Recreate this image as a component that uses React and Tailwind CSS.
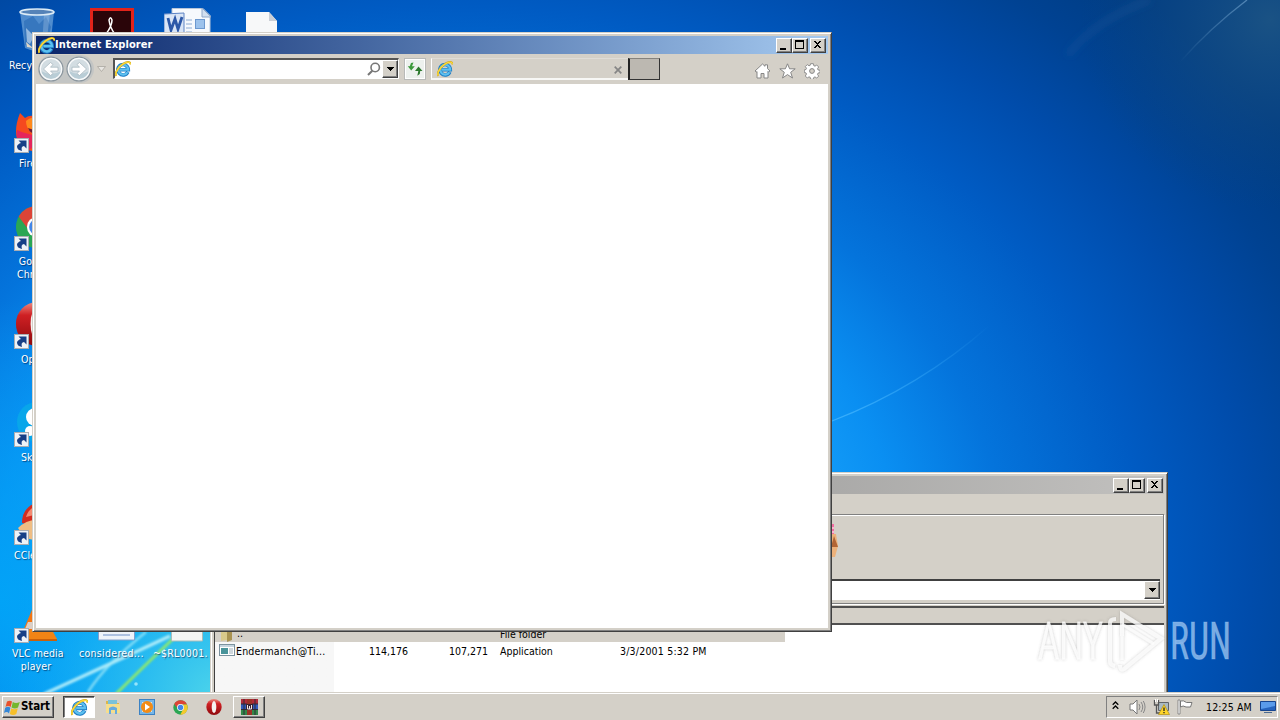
import React from "react";

const FONT =
  "font-['DejaVu_Sans_Condensed','DejaVu_Sans',sans-serif] [font-stretch:condensed]";

function IEIcon({ size = 16 }) {
  return (
    <svg width={size} height={size} viewBox="0 0 16 16" className="shrink-0">
      <path d="M12.8 11A5.200 5.200 0 1 1 13.300 8.700H5" fill="none" stroke="#1d7cc4" strokeWidth="3.600" />
      <path d="M12.500 11.200A5 5 0 1 1 13.200 8.600H5" fill="none" stroke="#5cc0f0" strokeWidth="2.200" />
      <path d="M1.400 14.800C-.6 12.500 2.600 7 7.200 3.600 11 .8 15.600-.3 15.400 3.400" fill="none" stroke="#c79d1a" strokeWidth="1.900" />
      <path d="M1.400 14.600C-.4 12.400 2.600 7 7.200 3.600 11 .8 15.400-.1 15.300 3.200" fill="none" stroke="#fbd93a" strokeWidth="1.400" />
    </svg>
  );
}

function ChromeIcon({ size, flat }) {
  return (
    <svg width={size} height={size} viewBox="0 0 48 48" className="block">
      <circle cx="24" cy="24" r="23" fill="#2aa653" />
      <path d="M4 12.5A23 23 0 0 1 44.6 14H24a10 10 0 0 0-9.6 12.5z" fill="#dc4437" />
      <path d="M44.600 14A23 23 0 0 1 23 47l10-18a10 10 0 0 0-3-15z" fill={flat ? "#f4c92c" : "#f7cc35"} />
      <circle cx="24" cy="24" r="11" fill="#fff" />
      <circle cx="24" cy="24" r="8.600" fill="#4286e8" />
    </svg>
  );
}

function OperaIcon({ size }) {
  return (
    <svg width={size} height={size} viewBox="0 0 48 48" className="block">
      <defs>
        <linearGradient id="opera" x1="0" y1="0" x2="0" y2="1">
          <stop offset="0" stopColor="#ee8b80" />
          <stop offset=".3" stopColor="#cf2023" />
          <stop offset="1" stopColor="#8e0a0e" />
        </linearGradient>
      </defs>
      <ellipse cx="24" cy="24" rx="23" ry="24" fill="url(#opera)" />
      <ellipse cx="24" cy="24" rx="7" ry="18" fill="#f6f2f0" />
    </svg>
  );
}

function CaptionButton({ kind }) {
  return (
    <div className="h-[15px] w-4 border border-t-white border-l-white border-r-[#404040] border-b-[#404040] bg-[#d4d0c8] shadow-[inset_-1px_-1px_0_#808080]">
      <svg width="14" height="13" viewBox="0 0 14 13" className="block" shapeRendering="crispEdges">
        {kind === "min" && <path d="M3 9h6v2H3z" />}
        {kind === "max" && <path d="M2 1h9v9H2zM3 3v6h7V3z" fillRule="evenodd" />}
        {kind === "close" && (
          <path
            d="M3 2h2v1h1v1h1V3h1V2h2v1h-1v1H8v1H7v1h1v1h1v1h1v1H8V8H7V7H6v1H5v1H3V8h1V7h1V6h1V5H5V4H4V3H3z"
          />
        )}
      </svg>
    </div>
  );
}

function Captions() {
  return (
    <div className="flex">
      <CaptionButton kind="min" />
      <CaptionButton kind="max" />
      <div className="w-0.5" />
      <CaptionButton kind="close" />
    </div>
  );
}

function DropButton({ className }) {
  return (
    <div className={"flex shrink-0 items-center justify-center border border-t-white border-l-white border-r-[#404040] border-b-[#404040] bg-[#d4d0c8] shadow-[inset_-1px_-1px_0_#808080] " + className}>
      <svg width="7" height="4" viewBox="0 0 7 4" shapeRendering="crispEdges">
        <path d="M0 0h7v1H6v1H5v1H4v1H3V3H2V2H1V1H0z" />
      </svg>
    </div>
  );
}

function Wallpaper() {
  return (
    <svg className="absolute inset-0" width="1280" height="720" viewBox="0 0 1280 720">
      <defs>
        <radialGradient id="sky" gradientUnits="userSpaceOnUse" cx="0" cy="0" r="1.1" gradientTransform="translate(450 560) scale(900 720)">
          <stop offset=".36" stopColor="#16a0fa" />
          <stop offset=".455" stopColor="#0a8ff2" />
          <stop offset=".56" stopColor="#0474dc" />
          <stop offset=".7" stopColor="#005bc3" />
          <stop offset=".81" stopColor="#004cab" />
          <stop offset=".91" stopColor="#004292" />
          <stop offset="1" stopColor="#003c82" />
        </radialGradient>
        <radialGradient id="cyan" gradientUnits="userSpaceOnUse" cx="220" cy="700" r="230">
          <stop offset="0" stopColor="#4fd6ea" />
          <stop offset=".5" stopColor="#22b9f0" stopOpacity=".75" />
          <stop offset="1" stopColor="#00a4f6" stopOpacity="0" />
        </radialGradient>
        <radialGradient id="left" gradientUnits="userSpaceOnUse" cx="0" cy="600" r="300">
          <stop offset="0" stopColor="#00a8f8" stopOpacity=".8" />
          <stop offset="1" stopColor="#00a4f6" stopOpacity="0" />
        </radialGradient>
        <radialGradient id="corner" gradientUnits="userSpaceOnUse" cx="1270" cy="20" r="190">
          <stop offset="0" stopColor="#1a5284" />
          <stop offset="1" stopColor="#0a4484" stopOpacity="0" />
        </radialGradient>
        <linearGradient id="arc" gradientUnits="userSpaceOnUse" x1="832" y1="420" x2="990" y2="325">
          <stop offset="0" stopColor="#48b8ff" stopOpacity=".75" />
          <stop offset="1" stopColor="#48b8ff" stopOpacity="0" />
        </linearGradient>
        <linearGradient id="ray" gradientUnits="userSpaceOnUse" x1="1245" y1="0" x2="1180" y2="62">
          <stop offset="0" stopColor="#6a9cc8" stopOpacity=".7" />
          <stop offset="1" stopColor="#6a9cc8" stopOpacity="0" />
        </linearGradient>
        <filter id="soft"><feGaussianBlur stdDeviation="1.2" /></filter>
        <filter id="softer"><feGaussianBlur stdDeviation="3.5" /></filter>
      </defs>
      <rect width="1280" height="720" fill="url(#sky)" />
      <rect y="300" width="300" height="420" fill="url(#left)" />
      <rect width="460" height="720" fill="url(#cyan)" />
      <rect x="1040" width="240" height="240" fill="url(#corner)" />
      <path d="M832 421Q920 387 990 325" stroke="url(#arc)" strokeWidth="1.300" fill="none" />
      <path d="M1247 0Q1210 28 1180 62" stroke="url(#ray)" strokeWidth="1.300" fill="none" />
      <path d="M1150 0Q1095 20 1068 55" stroke="#2b66a0" strokeOpacity=".28" strokeWidth="6" fill="none" filter="url(#softer)" />
      <g fill="none" filter="url(#soft)">
        <path d="M44 694Q110 664 170 636" stroke="#b9f1fb" strokeWidth="3.500" strokeOpacity=".9" />
        <path d="M88 692Q106 664 146 632" stroke="#a9ecf8" strokeWidth="2.500" strokeOpacity=".7" />
        <path d="M116 694Q142 668 176 636" stroke="#8ee86e" strokeWidth="3" />
      </g>
      <circle cx="136" cy="684" r="1.800" fill="#c5f6ff" fillOpacity=".7" />
    </svg>
  );
}

function Shortcut({ className }) {
  return (
    <svg width="15" height="15" viewBox="0 0 15 15" className={"absolute " + className}>
      <rect x=".5" y=".5" width="14" height="14" fill="#eef2f7" stroke="#a9adb3" />
      <path d="M4.500 2.500h8v8L10 8Q6.500 8.500 8 13 3 12 3 8.500 3.500 6 7 5z" fill="#173f86" />
    </svg>
  );
}

function Label({ className, children }) {
  return (
    <div className={"absolute text-center text-[10.5px] leading-[13px] tracking-[0.1px] whitespace-nowrap text-white [text-shadow:1px_1px_1px_rgba(0,20,60,.6)] " + className}>
      {children}
    </div>
  );
}

function DesktopIcons() {
  return (
    <>
      <svg className="absolute top-1.5 left-4" width="42" height="48" viewBox="0 0 42 48">
        <path d="M4 6l5 36q12 6 25 0l4-36z" fill="#7aaede" fillOpacity=".65" />
        <path d="M8 15l9-5 6 8 7-7 5 10-4 18-9-4-6 6-7-2z" fill="#2e6eb8" fillOpacity=".7" />
        <path d="M10 22l8 8-4 8-3-2z" fill="#d7e8f6" fillOpacity=".6" />
        <path d="M28 8h6l-4 32h-4z" fill="#d7e8f6" fillOpacity=".25" />
        <path d="M10 36l7 6-6-1z" fill="#e0d8c8" />
        <ellipse cx="21" cy="6" rx="17" ry="3" fill="#5583b8" stroke="#dcebf6" strokeWidth="1.600" />
      </svg>
      <Label className="top-[59px] left-[9px]">Recycle Bin</Label>

      <svg className="absolute top-2 left-[90px]" width="44" height="26" viewBox="0 0 44 26">
        <rect width="44" height="44" fill="#e2231a" />
        <rect x="3" y="3" width="38" height="38" fill="#2a0509" />
        <path d="M16 26Q22 18 22 12 20.500 7.500 19 12 20 20 25 26" fill="none" stroke="#fff" strokeWidth="1.500" />
      </svg>

      <svg className="absolute top-2 left-[164px]" width="48" height="26" viewBox="0 0 48 26">
        <path d="M8 .500h31l7 7V26H8z" fill="#f6f9fd" stroke="#b7c6da" />
        <path d="M38 0v9h9z" fill="#d2dfef" stroke="#91a8c8" />
        <path d="M22 12h6M22 16h6M22 20h6M22 24h6" stroke="#8cabd4" />
        <rect x="31.500" y="11.500" width="9" height="9" fill="#9cc2ec" stroke="#6c98cf" />
        <path d="M0 6l20-1v21H0z" fill="#d9e5f6" stroke="#5c83c4" />
        <path d="M4 10l3 12 4-11 3 10 4-12" fill="none" stroke="#2c58a8" strokeWidth="2.800" />
      </svg>

      <svg className="absolute top-3 left-[246px]" width="32" height="24" viewBox="0 0 32 24">
        <path d="M0 0h23l8 9v15H0z" fill="#f7f8f9" />
        <path d="M23 0v9h8z" fill="#c9ced6" />
      </svg>

      <svg className="absolute top-[110px] left-[15px]" width="44" height="44" viewBox="0 0 44 44">
        <path d="M5 3l5 5q4-3 9-2l4-3v38Q6 42 2 29-1 18 5 3z" fill="#f5491f" />
        <path d="M2 20Q0 36 14 40l9-7V26q-12-2-21-6z" fill="#e5255c" />
        <path d="M11 11q5-5 12-3v20q-5-1-7-6-5-4-5-11z" fill="#ff8a1c" />
        <path d="M13 18l9 3v3q-7 0-9-6z" fill="#6a1b38" />
      </svg>
      <Shortcut className="top-[138px] left-3.5" />
      <Label className="top-[157px] left-[19px]">Firefox</Label>

      <div className="absolute top-[205px] left-[15px]"><ChromeIcon size={44} /></div>
      <Shortcut className="top-[236px] left-3.5" />
      <Label className="top-[255px] left-[17px]">Google<br />Chrome</Label>

      <div className="absolute top-[302px] left-[15px]"><OperaIcon size={44} /></div>
      <Shortcut className="top-[334px] left-3.5" />
      <Label className="top-[353px] left-[21px]">Opera</Label>

      <svg className="absolute top-[400px] left-[15px]" width="44" height="44" viewBox="0 0 44 44">
        <circle cx="22" cy="22" r="20" fill="#08a6ea" />
        <circle cx="20" cy="17" r="9" fill="#fff" />
        <circle cx="15" cy="31" r="5" fill="#fff" />
      </svg>
      <Shortcut className="top-[432px] left-3.5" />
      <Label className="top-[451px] left-[21px]">Skype</Label>

      <svg className="absolute top-[500px] left-[18px]" width="40" height="44" viewBox="0 0 40 44">
        <path d="M4 23Q4 7 20 2v26L9 24z" fill="#d32d20" />
        <path d="M8 17q2-7 8-10v8z" fill="#f48a70" />
        <path d="M0 28q9-9 20-8v20q-12 2-20-12z" fill="#efbd83" />
      </svg>
      <Shortcut className="top-[530px] left-3.5" />
      <Label className="top-[549px] left-[14px]">CCleaner</Label>

      <svg className="absolute top-[600px] left-[18px]" width="42" height="44" viewBox="0 0 42 44">
        <path d="M16 5h7l9 26H5z" fill="#f37512" />
        <path d="M10 22h16l3 7H7z" fill="#dccfc6" />
        <path d="M4 30h30l5 9H0z" fill="#f18415" />
        <path d="M0 39h39v2H0z" fill="#c9600a" />
      </svg>
      <Shortcut className="top-[628px] left-3.5" />
      <Label className="top-[647px] left-3 w-12">VLC media<br />player</Label>

      <svg className="absolute top-[610px] left-[98px]" width="37" height="32" viewBox="0 0 37 32">
        <path d="M.500 0h36v30H.500z" fill="#eef3fa" stroke="#7f9fce" />
        <path d="M5 25h27M5 21h27" stroke="#6d8fc8" />
      </svg>
      <Label className="top-[647px] left-[79px] tracking-[0.3px]">considered...</Label>

      <svg className="absolute top-[610px] left-[171px]" width="32" height="32" viewBox="0 0 32 32">
        <path d="M.500 0h31v31H.500z" fill="#f4f5f4" stroke="#a9bcb9" />
      </svg>
      <Label className="top-[647px] left-[153px] tracking-[0.2px]">~$RL0001.</Label>
    </>
  );
}

const FILE_GRID = "grid grid-cols-[119px_74px_80px_12px_120px_1fr] items-center";

function ArchiveWindow() {
  return (
    <div className="absolute top-[472px] left-[210px] flex h-[240px] w-[958px] flex-col border border-t-[#d4d0c8] border-l-[#d4d0c8] border-r-[#404040] border-b-[#404040] bg-[#d4d0c8] p-[3px] shadow-[inset_1px_1px_0_#fff,inset_-1px_-1px_0_#808080]">
      <div className="flex h-[18px] shrink-0 items-center justify-end bg-linear-to-r from-[#808080] to-[#c2c1bf] pr-px">
        <Captions />
      </div>
      <div className="h-5 shrink-0" />
      <div className="flex h-[90px] shrink-0 flex-col border border-[#808080] shadow-[inset_1px_1px_0_#fff,1px_1px_0_#fff]">
        <div className="flex h-16 shrink-0 pt-[7px] pl-[600px]">
          <svg width="24" height="40" viewBox="0 0 24 40">
            <path d="M4 2h15v11H4z" fill="#f36ca2" />
            <path d="M12 5h7v2h-7zM12 9h7v2h-7z" fill="#f9b7cc" />
            <path d="M4 12h17l2 12-3 11H4z" fill="#edb17a" />
            <path d="M19 14l4 11h-7z" fill="#b26535" />
            <path d="M11 14h6l-1 9h-3z" fill="#f9e2ba" />
          </svg>
        </div>
        <div className="mr-[3px] flex h-[22px] border-t-2 border-b border-t-[#404040] border-b-[#d4d0c8] bg-white">
          <div className="flex-1" />
          <DropButton className="h-[18px] w-4" />
        </div>
      </div>
      <div className="mt-[2px] flex min-h-0 flex-1 flex-col border-t-2 border-l border-t-[#505050] border-l-[#404040] bg-white text-[10.500px] text-black">
        <div className="h-[17px] shrink-0 border-b-2 border-b-[#505050] bg-[#d4d0c8]" />
        <div className={FILE_GRID + " mt-px h-4 w-[570px] shrink-0 bg-[#d4d0c8]"}>
          <div className="flex items-center gap-[3px] pl-1">
            <svg width="15" height="15" viewBox="0 0 15 15">
              <path d="M2 2l6-2v13l-6 1z" fill="#d9c98b" />
              <path d="M8 0l5 2v11l-5 2z" fill="#a99352" />
            </svg>
            <span>..</span>
          </div>
          <span /><span /><span />
          <span className="relative top-px">File folder</span>
        </div>
        <div className="flex min-h-0 flex-1 bg-linear-to-r from-[#f7f7f7] from-[119px] to-white to-[119px]">
          <div className={FILE_GRID + " h-5 flex-1"}>
            <div className="flex items-center gap-px pl-1">
              <svg width="16" height="12" viewBox="0 0 16 12" className="-mt-1 shrink-0">
                <rect x=".500" y=".500" width="15" height="11" fill="#fff" stroke="#7b929e" />
                <path d="M1 1h14v2H1z" fill="#c5d5df" />
                <path d="M2 4h7v6H2z" fill="#49949a" />
                <path d="M10 5h4M10 7h4M10 9h4" stroke="#9cadb8" />
              </svg>
              <span className="tracking-[0.2px] whitespace-nowrap">Endermanch@Ti...</span>
            </div>
            <span className="text-right">114,176</span>
            <span className="text-right">107,271</span>
            <span />
            <span>Application</span>
            <span className="tracking-[0.2px]">3/3/2001 5:32 PM</span>
          </div>
        </div>
      </div>
    </div>
  );
}

function NavCircle({ flip }) {
  return (
    <svg width="26" height="26" viewBox="0 0 26 26" className={"shrink-0 " + (flip ? "-scale-x-100" : "")}>
      <circle cx="13" cy="13" r="11.900" fill="#d3dde2" stroke="#8c979f" strokeWidth="1.400" />
      <path d="M3 15a10.200 10.200 0 0 0 20 0q-5 3-10 3T3 15z" fill="#b9cdd6" />
      <circle cx="13" cy="13" r="10.700" fill="none" stroke="#fff" strokeOpacity=".85" strokeWidth="1.300" />
      <path d="M5.500 13l7-6.500L15 8.500l-2.500 2.700H20v3.800h-7.500L15 17.500l-2.500 2z" fill="#fff" stroke="#a4b3bc" strokeWidth=".7" />
    </svg>
  );
}

function BrowserWindow() {
  return (
    <div className="absolute top-8 left-8 flex h-[600px] w-[800px] flex-col border border-t-[#d4d0c8] border-l-[#d4d0c8] border-r-[#404040] border-b-[#404040] bg-[#d4d0c8] p-[3px] shadow-[inset_1px_1px_0_#fff,inset_-1px_-1px_0_#808080]">
      <div className="flex h-[18px] shrink-0 items-center justify-between bg-linear-to-r from-[#0a246a] to-[#a6caf0] pr-0.5 pl-0.5">
        <div className="flex items-center">
          <IEIcon size={17} />
          <span className="text-[11px] font-bold tracking-[0.1px] text-white">Internet Explorer</span>
        </div>
        <Captions />
      </div>
      <div className="flex h-[30px] shrink-0 items-center">
        <div className="ml-0.5 flex h-7 w-[56px] items-center gap-0.5 rounded-full bg-[#c3c5c4]">
          <NavCircle />
          <NavCircle flip />
        </div>
        <svg width="9" height="6" viewBox="0 0 9 6" className="ml-[3px] shrink-0">
          <path d="M.500.500h8l-4 5z" fill="#e8e6e2" stroke="#aaa69e" strokeWidth=".8" />
        </svg>
        <div className="-mt-px ml-[7px] flex h-[21px] w-[286px] items-center border-t-2 border-l-2 border-t-[#555] border-l-[#555] border-r border-b border-r-white border-b-white bg-white">
          <IEIcon />
          <div className="flex-1" />
          <svg width="16" height="16" viewBox="0 0 16 16">
            <circle cx="9.200" cy="6.500" r="4.200" fill="none" stroke="#777" strokeWidth="1.600" />
            <path d="M6.300 9.700L2 14" stroke="#777" strokeWidth="2" />
          </svg>
          <DropButton className="h-[18px] w-4" />
        </div>
        <div className="ml-[5px] flex h-[22px] w-[22px] items-center justify-center border border-[#b8bab8] bg-[#edf1ee] shadow-[inset_0_0_0_1px_#fff]">
          <svg width="16" height="16" viewBox="0 0 16 16" className="shrink-0">
            <path d="M6.500 1.500L5 5.200h2.800L4.200 9.500.800 5.200h2L4 2z" fill="#3c9a3c" />
            <path d="M11.500 5.500l4 4.500h-2.300l-.400 3-2.500 1.800 1-4.800H8z" fill="#2c7a2e" />
          </svg>
        </div>
        <div className="ml-[5px] flex h-[22px] w-[197px] items-center border-t border-b-2 border-l border-t-[#dfdcd6] border-b-[#f7f7f5] border-l-white pl-[5px]">
          <IEIcon />
          <div className="flex-1" />
          <svg width="8" height="8" viewBox="0 0 8 8" className="mt-0.5 mr-1.5">
            <path d="M.700.700l6.600 6.600M7.300.700L.700 7.300" stroke="#858585" strokeWidth="1.700" />
          </svg>
        </div>
        <div className="h-[22px] w-8 border-t border-r border-b border-l-2 border-t-[#85827d] border-r-[#333] border-b-[#333] border-l-[#222] bg-[#bcb8b1]" />
        <div className="flex-1" />
        <div className="mt-1 mr-2 flex items-center gap-2">
          <svg width="17" height="16" viewBox="0 0 17 16">
            <path d="M1 8l7.500-7L11 3.300V1.800h2.500v3.800L16 8l-1.500 1-.500-.500V15h-4v-4.500H7V15H3V8.500L2.400 9z" fill="#fff" stroke="#868686" />
          </svg>
          <svg width="17" height="16" viewBox="0 0 17 16">
            <path d="M8.500.800l2.100 5h5.600l-4.500 3.500 1.800 5.700-5-3.400-5 3.400 1.800-5.700L.800 5.800h5.600z" fill="#fff" stroke="#868686" />
          </svg>
          <svg width="16" height="16" viewBox="0 0 16 16">
            <path d="M6.600.700h2.800l.4 2 1.200.5 1.700-1.200 2 2-1.200 1.700.5 1.200 2 .4v2.400l-2 .4-.5 1.300 1.200 1.700-2 2-1.700-1.200-1.200.5-.4 1.900H6.600l-.4-2-1.200-.5-1.700 1.200-2-2L2.500 11 2 9.900l-1.700-.400V6.900L2 6.500l.500-1.200L1.300 3.600l2-2L5 2.800l1.200-.5z" fill="#fff" stroke="#868686" strokeWidth=".9" />
            <circle cx="8" cy="8" r="2.400" fill="#d4d0c8" stroke="#868686" />
          </svg>
        </div>
      </div>
      <div className="min-h-0 flex-1 bg-white" />
    </div>
  );
}

function Taskbar() {
  return (
    <div className="absolute inset-x-0 bottom-0 flex h-7 items-center border-t border-[#d4d0c8] bg-[#d4d0c8] pt-px pr-0.5 pl-0.5 shadow-[inset_0_1px_0_#fff]">
      <div className="flex h-[22px] w-[52px] items-center gap-px border border-t-white border-l-white border-r-[#404040] border-b-[#404040] pl-px shadow-[inset_-1px_-1px_0_#808080]">
        <svg width="16" height="15" viewBox="0 0 16 15" className="shrink-0">
          <path d="M3 1.500Q6 0 8 1.500L6.700 7Q4 5 1.500 7z" fill="#e8512b" />
          <path d="M8.800 2q3 2 7 0L14 7.500q-3 2-6.500 0z" fill="#74b72e" />
          <path d="M1.200 7.800q3-2 5.200 0L5 13.500Q3 11 0 13z" fill="#3487d7" />
          <path d="M7.300 8.300q3 2 6.500 0L12.300 14q-3 2-6.500 0z" fill="#f6bf29" />
        </svg>
        <span className="text-[11.500px] font-bold tracking-[-0.1px] text-black">Start</span>
      </div>
      <div className="ml-[9px] flex h-[22px] w-8 items-center justify-center border border-t-[#404040] border-l-[#404040] border-r-white border-b-white bg-white shadow-[inset_1px_1px_0_#808080]">
        <IEIcon size={17} />
      </div>
      <div className="ml-[10px] flex items-center gap-[18px]">
        <svg width="16" height="16" viewBox="0 0 16 16">
          <path d="M1 2h5l1 2h7v9H1z" fill="#dcb64b" />
          <path d="M3 1h9v5H3z" fill="#7ac2d8" />
          <path d="M1 5h14v9H1z" fill="#f6de8c" />
          <path d="M4 15V9q4-3 8 0v6h-2v-4H6v4z" fill="#68abdc" />
        </svg>
        <svg width="16" height="16" viewBox="0 0 16 16">
          <rect x=".500" y=".500" width="15" height="15" fill="#75b6e8" stroke="#3b82c4" />
          <path d="M3 3h10v10H3z" fill="#d8edfa" />
          <circle cx="8" cy="8" r="6" fill="#f28b16" />
          <path d="M6 4.500l5 3.500-5 3.500z" fill="#fff" />
        </svg>
        <ChromeIcon size={15} flat />
        <OperaIcon size={16} />
      </div>
      <div className="ml-[11px] flex h-[22px] w-8 items-center justify-center border border-t-white border-l-white border-r-[#404040] border-b-[#404040] shadow-[inset_-1px_-1px_0_#808080]">
        <svg width="17" height="16" viewBox="0 0 17 16">
          <path d="M0 0h17v5H0z" fill="#b12a38" />
          <path d="M0 5h17v5H0z" fill="#315bbd" />
          <path d="M0 10h17v6H0z" fill="#338748" />
          <path d="M3 0v16M14 0v16M0 5h17M0 10.500h17" stroke="#302b35" />
          <path d="M6 0h5v16H6z" fill="#9c3226" />
          <path d="M5 5h7v6H5z" fill="#3a2430" />
          <path d="M6.500 6v4h4V6M8.500 7v3" fill="none" stroke="#f1e7e4" />
        </svg>
      </div>
      <div className="flex-1" />
      <div className="flex h-[22px] w-[172px] items-center border border-t-[#808080] border-l-[#808080] border-r-white border-b-white pl-[5px]">
        <svg width="7" height="9" viewBox="0 0 7 9" className="-mt-1 shrink-0">
          <path d="M.700 3.800L3.500 1l2.800 2.800M.700 7.800L3.500 5l2.800 2.800" fill="none" stroke="#000" strokeWidth="1.300" />
        </svg>
        <svg width="17" height="16" viewBox="0 0 17 16" className="ml-[10px] shrink-0">
          <path d="M1 5h3l4-4v14l-4-4H1z" fill="#fff" stroke="#777" />
          <path d="M10 5q2 3 0 6M12 3q3.500 5 0 10M14.300 2q3.500 6 0 12" fill="none" stroke="#888" />
        </svg>
        <svg width="17" height="16" viewBox="0 0 17 16" className="ml-[7px] shrink-0">
          <path d="M5.500 3.500h10v8h-10z" fill="#a9b9c2" stroke="#606468" />
          <path d="M1.500 1v5h4V1M3.500 6v8h5" fill="none" stroke="#555" strokeWidth="1.300" />
          <path d="M2.500 0v3M4.500 0v3" stroke="#fff" />
          <path d="M11 5.500l5.500 10h-11z" fill="#ffd529" stroke="#a98500" strokeWidth=".6" />
          <path d="M11 8.500v3.500M11 13v1.300" stroke="#222" strokeWidth="1.300" />
        </svg>
        <svg width="17" height="16" viewBox="0 0 17 16" className="ml-[7px] shrink-0">
          <path d="M1 1h2v14H1z" fill="#fff" stroke="#777" strokeWidth=".8" />
          <path d="M3.500 2q3-1 6 1.500H15L13.500 8H9Q6 6 3.500 8z" fill="#fff" stroke="#777" />
        </svg>
        <span className="mt-px ml-3 text-[10.500px] tracking-[0.12px] whitespace-nowrap text-black">12:25 AM</span>
        <div className="flex-1" />
        <svg width="16" height="14" viewBox="0 0 16 14" className="mr-px shrink-0">
          <path d="M.500 1.500h15v9H.500z" fill="#2563bd" stroke="#17458f" />
          <path d="M1 2h14v4L1 9z" fill="#5a9bea" />
          <path d="M4 12h8v1H4z" fill="#4b6a91" />
        </svg>
      </div>
    </div>
  );
}

function Watermark() {
  return (
    <svg className="absolute top-[590px] left-[1020px] overflow-visible" width="240" height="100" viewBox="-10 -10 240 100">
      <defs>
        <filter id="wm" x="-10%" y="-10%" width="120%" height="120%">
          <feDropShadow dx="0" dy="0" stdDeviation="1.800" floodColor="#555" floodOpacity=".4" />
        </filter>
      </defs>
      <g filter="url(#wm)">
        <text x="8" y="59" textLength="65" lengthAdjust="spacingAndGlyphs" fill="#fff" fillOpacity=".75" stroke="#fff" strokeOpacity=".6" strokeWidth="1.200" fontFamily="Roboto, sans-serif" fontWeight="300" fontSize="51">ANY</text>
        <g fill="none" stroke="#fff" strokeWidth="4" strokeOpacity=".75">
          <path d="M92 36V14L131 38.500 94 69q-4 2-4-4" />
          <path d="M92 24L124 44M92 60V36" strokeWidth="3" />
          <path d="M86 19q-6 0-6 4v38q0 4 5 5" />
        </g>
      </g>
      <text x="140" y="59" textLength="61" lengthAdjust="spacingAndGlyphs" fill="#a9cff6" fillOpacity=".72" stroke="#a9cff6" strokeOpacity=".3" strokeWidth="1.200" fontFamily="Roboto, sans-serif" fontWeight="400" fontSize="51">RUN</text>
    </svg>
  );
}

export default function App() {
  return (
    <div className={"relative h-[720px] w-[1280px] overflow-hidden bg-[#0068d0] " + FONT}>
      <Wallpaper />
      <DesktopIcons />
      <ArchiveWindow />
      <BrowserWindow />
      <Taskbar />
      <Watermark />
    </div>
  );
}
